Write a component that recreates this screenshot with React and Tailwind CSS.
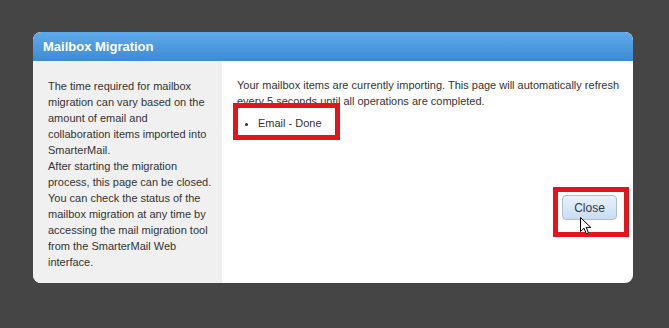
export default function App() {
  return (
    <div
      className="relative w-[669px] h-[328px] bg-[#454545] overflow-hidden"
      style={{ fontFamily: '"Liberation Sans", Arial, sans-serif' }}
    >
      <div className="pt-[32px] pl-[33px]">
        <div className="w-[600px] h-[251px] flex flex-col rounded-[8px] overflow-hidden bg-white">
          <div className="h-[29px] shrink-0 flex items-center pl-[10px] bg-gradient-to-b from-[#5eaaeb] to-[#3d8bd3] rounded-t-[8px]">
            <span className="text-white font-bold text-[13px]">Mailbox Migration</span>
          </div>
          <div className="flex flex-1">
            <div className="w-[189px] shrink-0 bg-[#f0f0f0] pl-[15px] pr-[10px] pt-[17px] text-[11px] leading-[16px] text-[#333]">
              <p>
                The time required for mailbox migration can vary based on the amount of email and collaboration items imported into SmarterMail.
              </p>
              <p>
                After starting the migration process, this page can be closed. You can check the status of the mailbox migration at any time by accessing the mail migration tool from the SmarterMail Web interface.
              </p>
            </div>
            <div className="flex-1 flex flex-col pl-[15px] pr-[10px] pt-[16px] text-[11px] text-[#333]">
              <p className="leading-[16px]">
                Your mailbox items are currently importing. This page will automatically refresh every 5 seconds until all operations are completed.
              </p>
              <ul className="mt-[6px] pl-[21px] list-disc leading-[16px]">
                <li>Email - Done</li>
              </ul>
              <div className="flex justify-end mt-[64px] pr-[6px]">
                <button className="w-[55px] h-[25px] rounded-[4px] border border-[#a9bfd6] bg-gradient-to-b from-[#eaf2fb] to-[#c9dcf1] text-[12px] text-[#2b3a4a]">
                  Close
                </button>
              </div>
            </div>
          </div>
        </div>
      </div>

      {/* annotation boxes */}
      <div className="absolute left-[233px] top-[103px] w-[107px] h-[37px] border-[5px] border-[#e3141c]" />
      <div className="absolute left-[553px] top-[187px] w-[76px] h-[50px] border-[5px] border-[#e3141c]" />

      {/* cursor */}
      <svg className="absolute left-[580px] top-[217px]" width="12" height="18" viewBox="0 0 12 18">
        <path d="M0.5 0.5 L0.5 14.5 L4 11.2 L6.3 16.8 L8.5 15.9 L6.2 10.4 L10.8 10.4 Z" fill="white" stroke="black" strokeWidth="1" strokeLinejoin="miter" />
      </svg>
    </div>
  );
}
